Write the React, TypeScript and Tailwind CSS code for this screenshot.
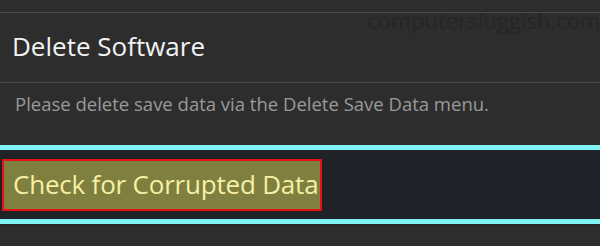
import React from "react";

export default function App() {
  return (
    <div className="w-[600px] h-[246px] bg-[#2d2d2d] overflow-hidden relative" style={{ fontFamily: '"Open Sans", "Noto Sans", sans-serif' }}>
      <div className="h-[12px]" />
      <div className="h-px bg-[#4a4a4a]" />
      <div className="h-[69px] flex items-center pl-[12px] text-[26px] text-[#f2f2f2] leading-none pb-[3px] whitespace-nowrap">Delete Software</div>
      <div className="h-px bg-[#4a4a4a]" />
      <div className="h-[62px] pl-[15px] pt-[9px] text-[18.5px] text-[#9a9a9a] leading-[24px] whitespace-nowrap">Please delete save data via the Delete Save Data menu.</div>
      <div className="h-[5px] bg-[#7ff3f3]" />
      <div className="h-[69px] bg-[#1f2226] flex items-center pl-[2px]">
        <div className="w-[320px] h-[52px] border-2 border-[#e81010] bg-[#7f7f3f] flex items-center pl-[9px] pb-[2px] text-[26px] text-[#f5f0a5] leading-none whitespace-nowrap tracking-[-0.2px]">
          Check for Corrupted Data
        </div>
      </div>
      <div className="h-[5px] bg-[#7ff3f3]" />
      <div className="h-[2px] bg-[#25282b]" />
      <div className="absolute left-[367px] top-[6px] text-[22px] text-[#262626] leading-[28px]">computersluggish.com</div>
    </div>
  );
}
